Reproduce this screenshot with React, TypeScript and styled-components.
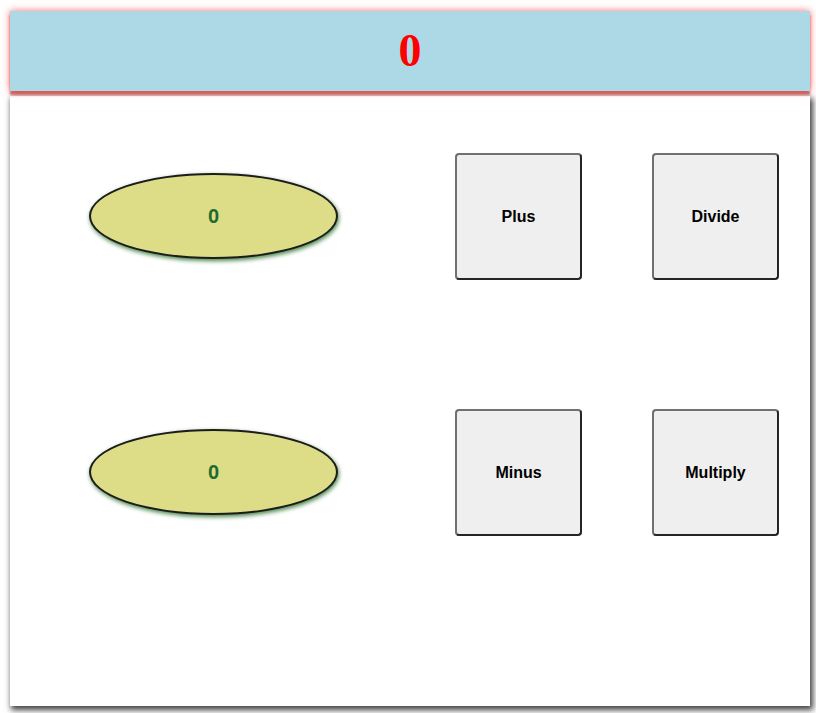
import React, { useState } from "react";
import styled, { createGlobalStyle } from "styled-components";

const GlobalStyle = createGlobalStyle`
  html, body { margin: 0; padding: 0; background: #ffffff; }
  body { font-family: "Liberation Sans", Arial, sans-serif; }
`;

const Page = styled.div`
  width: 810px;
  min-height: 100vh;
  box-sizing: border-box;
  padding: 11px 0 7px 10px;
  display: flex;
  flex-direction: column;
  gap: 5px;
`;

const Header = styled.div`
  height: 80px;
  flex-shrink: 0;
  background: #add8e6;
  display: flex;
  align-items: center;
  justify-content: center;
  box-shadow: 0 0 7px rgba(255, 40, 40, 0.7), 0 4px 2px rgba(180, 70, 70, 0.75);
  position: relative;
  z-index: 1;
`;

const Result = styled.span`
  font-family: "Liberation Serif", "Times New Roman", serif;
  font-weight: bold;
  font-size: 46px;
  color: #ff0000;
  line-height: 1;
`;

const Panel = styled.div`
  height: 610px;
  flex-shrink: 0;
  background: #ffffff;
  box-shadow: 2px 3px 6px 1px rgba(0, 0, 0, 0.75);
  display: flex;
  flex-direction: column;
  gap: 129px;
  padding-top: 57px;
  box-sizing: border-box;
`;

const Row = styled.div`
  display: flex;
  align-items: center;
  padding-left: 79px;
  height: 127px;
`;

const Oval = styled.div`
  width: 249px;
  height: 86px;
  box-sizing: border-box;
  border-radius: 50%;
  background: #dddd88;
  border: 2px solid #1c1c1c;
  box-shadow: 1px 2px 4px rgba(40, 110, 40, 0.85);
  display: flex;
  align-items: center;
  justify-content: center;
  margin-right: 117px;
  margin-top: -1px;
`;

const OvalValue = styled.span`
  font-family: "Liberation Sans", Arial, sans-serif;
  font-weight: bold;
  font-size: 20px;
  color: #1e6a2c;
`;

const Buttons = styled.div`
  display: flex;
  gap: 70px;
`;

const OpButton = styled.button`
  width: 127px;
  height: 127px;
  box-sizing: border-box;
  background: #efefef;
  border: 2px solid;
  border-color: #707070 #252525 #252525 #707070;
  border-radius: 4px;
  font-family: "Liberation Sans", Arial, sans-serif;
  font-weight: bold;
  font-size: 16px;
  color: #000000;
  padding: 0;
  cursor: pointer;
`;

export default function App() {
  const [a] = useState(0);
  const [b] = useState(0);
  const [result, setResult] = useState(0);

  return (
    <>
      <GlobalStyle />
      <Page>
        <Header>
          <Result>{result}</Result>
        </Header>
        <Panel>
          <Row>
            <Oval>
              <OvalValue>{a}</OvalValue>
            </Oval>
            <Buttons>
              <OpButton onClick={() => setResult(a + b)}>Plus</OpButton>
              <OpButton onClick={() => setResult(b === 0 ? 0 : a / b)}>Divide</OpButton>
            </Buttons>
          </Row>
          <Row>
            <Oval>
              <OvalValue>{b}</OvalValue>
            </Oval>
            <Buttons>
              <OpButton onClick={() => setResult(a - b)}>Minus</OpButton>
              <OpButton onClick={() => setResult(a * b)}>Multiply</OpButton>
            </Buttons>
          </Row>
        </Panel>
      </Page>
    </>
  );
}
